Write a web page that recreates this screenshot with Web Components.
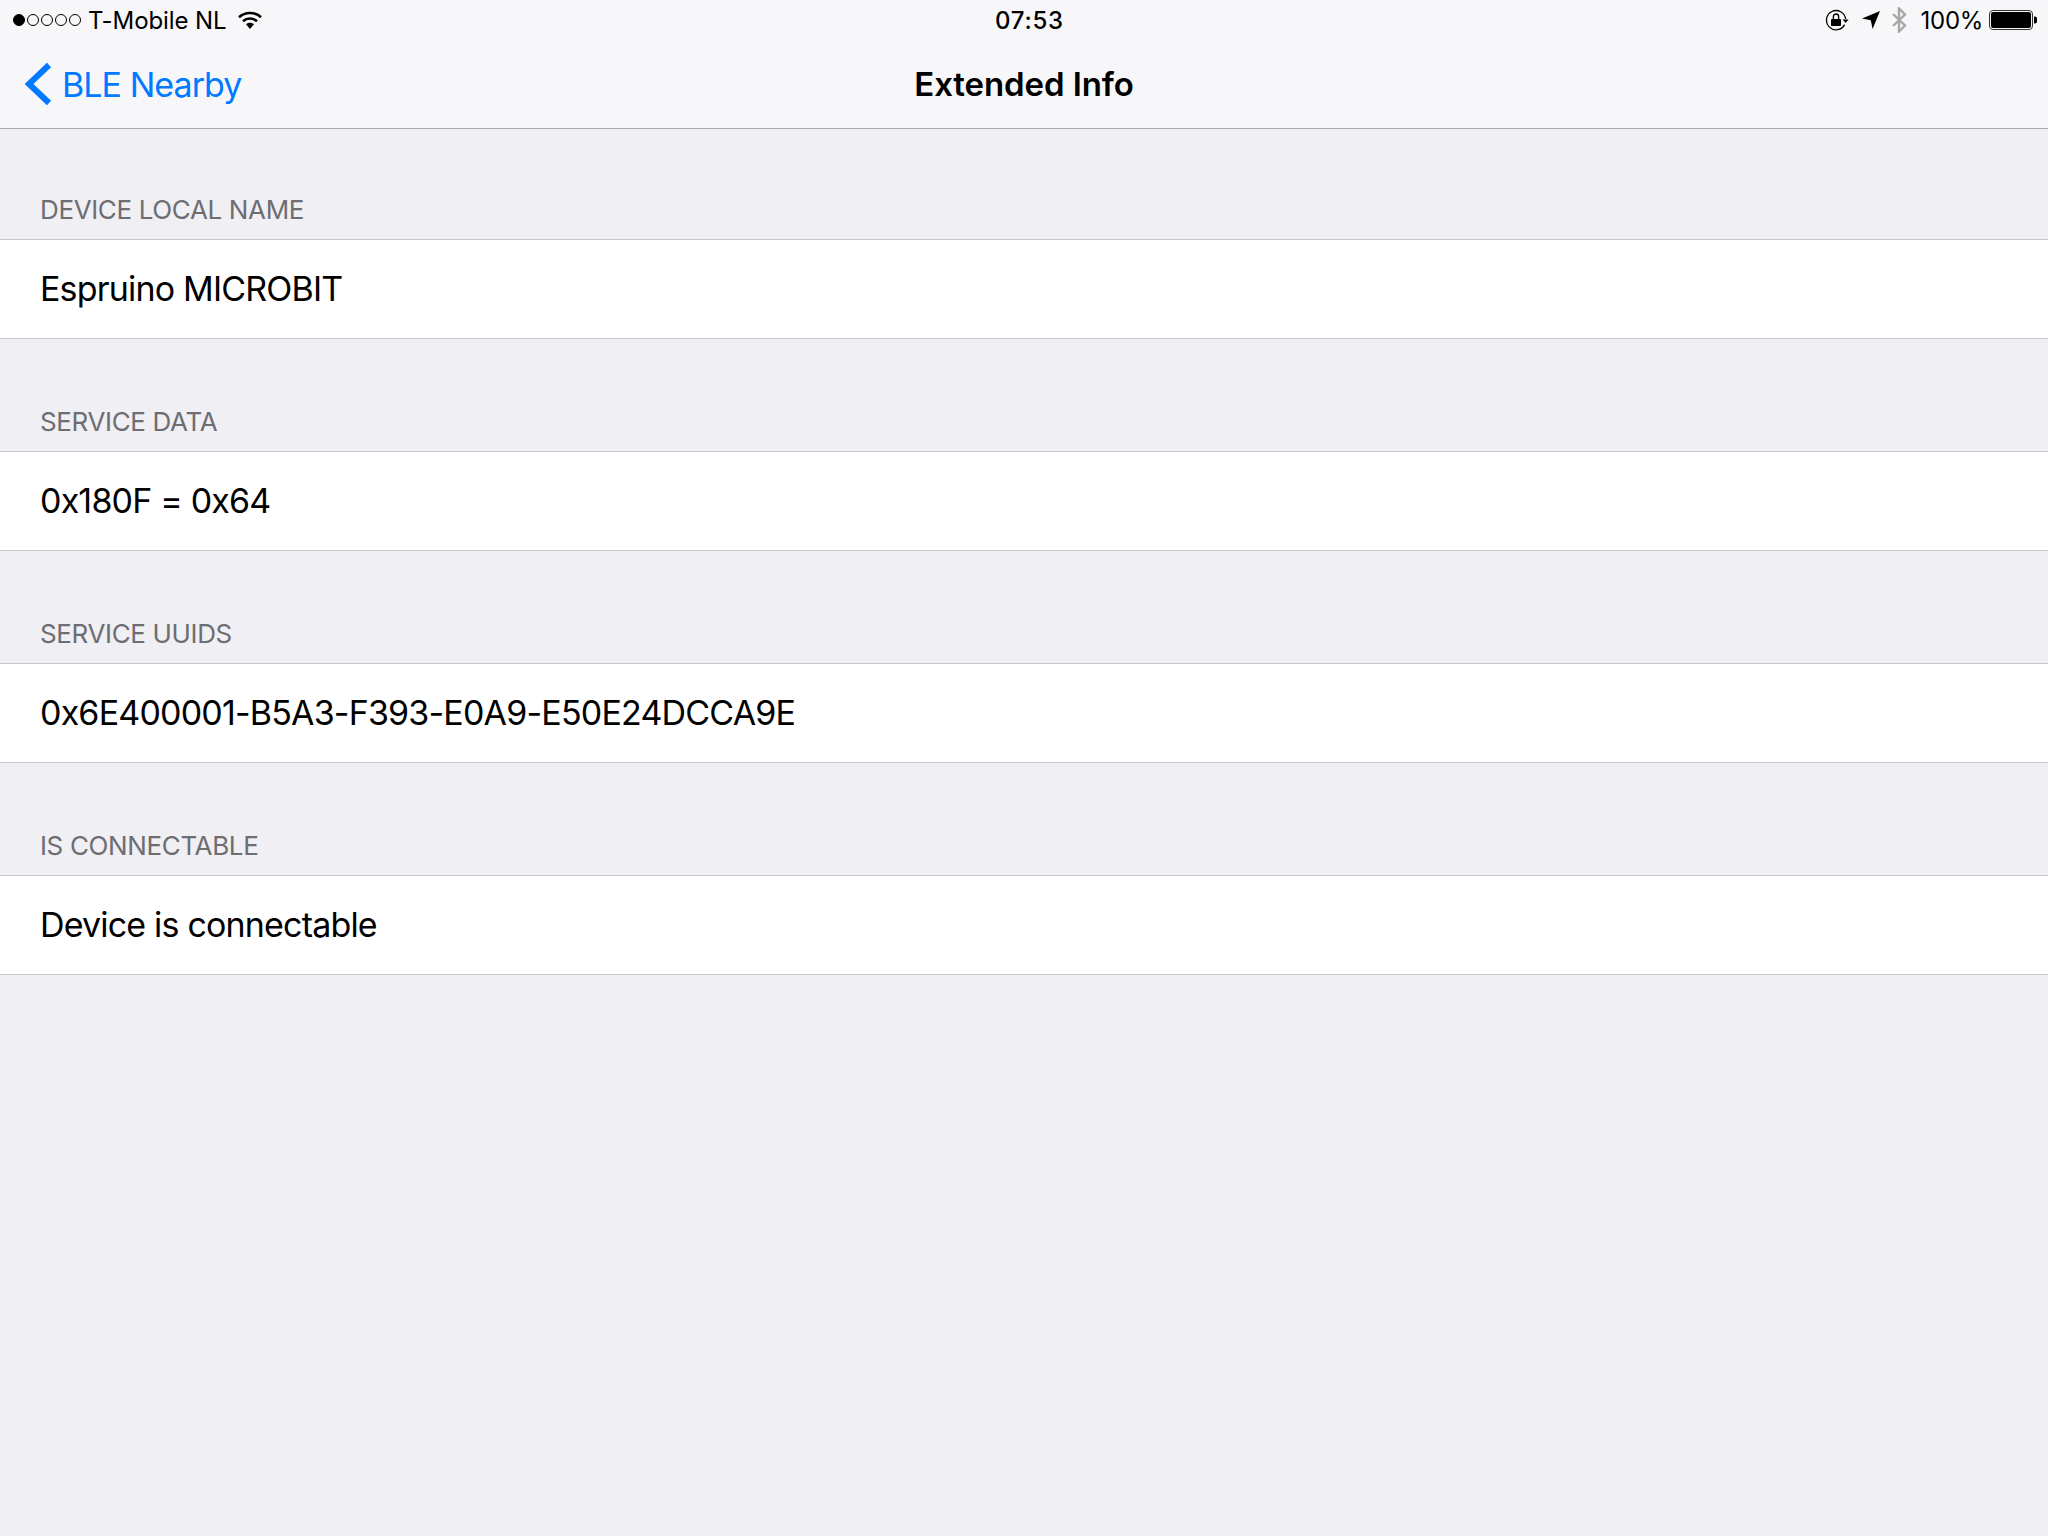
<!DOCTYPE html>
<html><head><meta charset="utf-8"><style>
html,body{margin:0;padding:0;background:#efeff4;}
body{width:2048px;height:1536px;overflow:hidden;font-family:Inter,"Liberation Sans",sans-serif;}
</style></head><body>
<ios-bar></ios-bar>
<ios-list>
<ios-section label="DEVICE LOCAL NAME">Espruino MICROBIT</ios-section>
<ios-section label="SERVICE DATA">0x180F = 0x64</ios-section>
<ios-section label="SERVICE UUIDS">0x6E400001-B5A3-F393-E0A9-E50E24DCCA9E</ios-section>
<ios-section label="IS CONNECTABLE">Device is connectable</ios-section>
</ios-list>
<script>
class IosBar extends HTMLElement{constructor(){super();this.attachShadow({mode:'open'}).innerHTML=`<style>
:host{display:block;height:128px;background:#f7f7f9;border-bottom:1px solid #a9a9ae;color:#000;}
.status{height:40px;display:grid;grid-template-columns:1fr auto 1fr;align-items:center;font-size:24px;}
.l,.r{display:flex;align-items:center;}
.l{padding-left:13px;}
.r{justify-content:flex-end;padding-right:10px;}
.time{font-weight:500;font-size:24px;letter-spacing:.75px;padding-left:11px;}
.dots{display:flex;gap:2px;width:68px;}
.dots i{width:10px;height:10px;border:1px solid #000;border-radius:50%;display:block;}
.dots i:first-child{background:#000;}
.car{margin-left:7px;letter-spacing:-.1px;}
.wifi{margin-left:12px;display:block;}
.nav{height:88px;display:grid;grid-template-columns:1fr auto 1fr;align-items:center;}
.back{display:flex;align-items:center;color:#007aff;font-size:34px;letter-spacing:-.95px;padding-left:24px;}
.back svg{display:block;margin-right:10px;}
.title{font-size:33px;font-weight:600;letter-spacing:-.1px;}
.rot{margin-right:13px;}
</style>
<div class="status">
<div class="l"><span class="dots"><i></i><i></i><i></i><i></i><i></i></span><span class="car">T-Mobile NL</span>
<svg class="wifi" width="24" height="18" viewBox="0 0 24 18"><path d="M1 6.2C7 .6 17 .6 23 6.2" fill="none" stroke="#000" stroke-width="2.6"/><path d="M5 10.2c4-3.6 10-3.6 14 0" fill="none" stroke="#000" stroke-width="2.6"/><path d="M8 13.2c2.4-2 5.6-2 8 0L12 18z" fill="#000"/></svg></div>
<div class="time">07:53</div>
<div class="r">
<svg class="rot" width="24" height="22" viewBox="0 0 24 22"><path d="M19.6 15.6A9.6 9.6 0 1 1 20.6 10" fill="none" stroke="#000" stroke-width="1.3"/><path d="M17.6 10.4h6l-3 3.6z" fill="#000"/><rect x="6" y="10" width="10" height="7" rx=".9" fill="#000"/><path d="M8.4 10.5V7.6a2.6 2.6 0 0 1 5.2 0v2.9" fill="none" stroke="#000" stroke-width="1.4"/></svg>
<svg width="18" height="18" viewBox="0 0 18 18" style="margin-right:11px"><path d="M18 0 10.6 18 8.8 9.2 0 7.6z" fill="#000"/></svg>
<svg width="16" height="26" viewBox="0 0 16 26" style="margin-right:14px"><path d="M2 7l12 11.5L8 24.5V1.5l6 6L2 19" fill="none" stroke="#a6a6a6" stroke-width="2.4"/></svg>
<span style="letter-spacing:-.3px;margin-right:6px">100%</span>
<svg width="49" height="20" viewBox="0 0 49 20"><rect x=".5" y=".5" width="43" height="19" rx="3.5" fill="none" stroke="#333"/><rect x="2" y="2" width="40" height="16" rx="2.2" fill="#000"/><path d="M45 6.5h1a2 2 0 0 1 2 2v3a2 2 0 0 1-2 2h-1z" fill="#000"/></svg>
</div></div>
<div class="nav"><div class="back"><svg width="28" height="44" viewBox="0 0 28 44"><path d="M25 3 5 22l20 19" fill="none" stroke="#007aff" stroke-width="6"/></svg><span>BLE Nearby</span></div><div class="title">Extended Info</div><div></div></div>`;}}
class IosList extends HTMLElement{constructor(){super();this.attachShadow({mode:'open'}).innerHTML=`<style>:host{display:flex;flex-direction:column;}</style><slot></slot>`;}}
class IosSection extends HTMLElement{constructor(){super();this.attachShadow({mode:'open'}).innerHTML=`<style>
:host{display:block;}
.h{height:110px;box-sizing:border-box;padding:0 40px 13px;display:flex;align-items:flex-end;color:#6d6d72;font-size:26px;line-height:32px;letter-spacing:-.36px;}
.c{height:100px;box-sizing:border-box;background:#fff;border-top:1px solid #c8c7cc;border-bottom:1px solid #c8c7cc;padding:0 40px 2px;display:flex;align-items:center;font-size:34px;letter-spacing:-.82px;color:#000;}
.g{height:2px;}
</style><div class="h"></div><div class="c"><slot></slot></div><div class="g"></div>`;this.shadowRoot.querySelector('.h').textContent=this.getAttribute('label')||'';}}
customElements.define('ios-bar',IosBar);customElements.define('ios-list',IosList);customElements.define('ios-section',IosSection);
</script>
</body></html>
